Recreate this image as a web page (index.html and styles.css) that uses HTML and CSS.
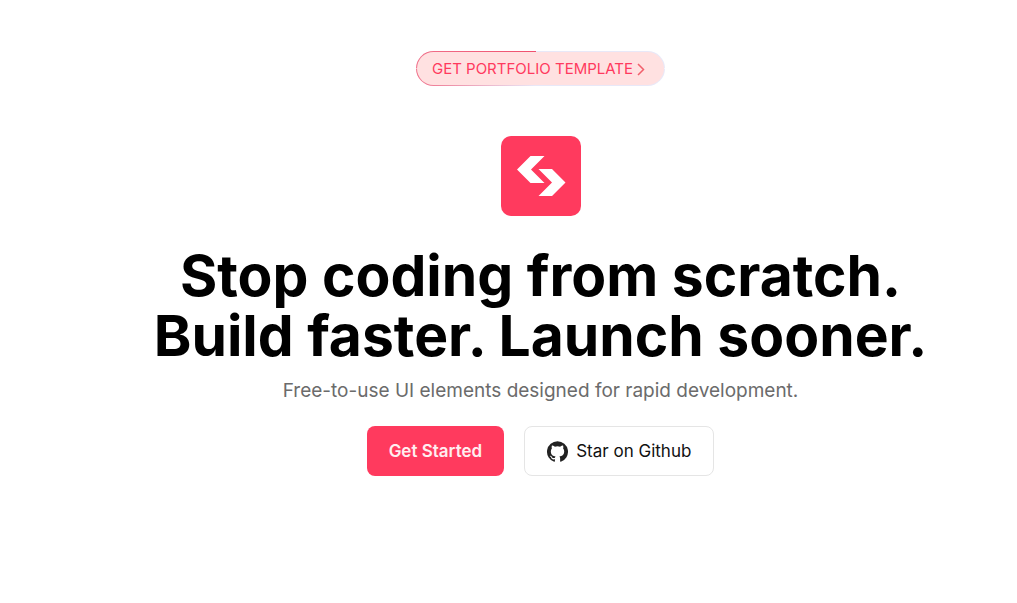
FILE: index.html
```html
<!DOCTYPE html>
<html lang="en">
<head>
  <meta charset="utf-8">
  <meta name="viewport" content="width=device-width, initial-scale=1">
  <title>UI elements for rapid development</title>
  <link rel="stylesheet" href="styles.css">
</head>
<body>
  <main class="hero">
    <a class="announcement" href="#template">
      <span>GET PORTFOLIO TEMPLATE</span>
      <svg class="chevron" viewBox="0 0 8 14" aria-hidden="true"><path d="M1 2l5.500 5.500L1 13" fill="none" stroke="currentColor" stroke-width="1.500"/></svg>
    </a>
    <svg class="logo" viewBox="0 0 80 80" aria-hidden="true">
      <rect width="80" height="80" rx="10" fill="#ff3a5e"/>
      <path fill="#fff" d="M29.500 20H43.500L30 33.500 43.500 47H29.500L16 33.500ZM37.500 33H51L64.500 46.500 51 60H37.500L51 46.500Z"/>
    </svg>
    <h1 class="title">Stop coding from scratch.<br>Build faster. Launch sooner.</h1>
    <p class="subtitle">Free-to-use UI elements designed for rapid development.</p>
    <div class="actions">
      <a class="button button-primary" href="#start">Get Started</a>
      <a class="button button-outline" href="#github">
        <svg class="github" viewBox="0 0 24 24" aria-hidden="true"><path fill="currentColor" d="M12 .3a12 12 0 0 0-3.800 23.380c.6.120.830-.260.830-.570v-2.230c-3.340.730-4.040-1.420-4.040-1.420-.550-1.380-1.330-1.750-1.330-1.750-1.090-.740.080-.730.080-.730 1.200.080 1.840 1.240 1.840 1.240 1.070 1.830 2.810 1.300 3.490 1 .110-.780.420-1.310.760-1.610-2.670-.3-5.470-1.330-5.470-5.930 0-1.310.470-2.380 1.240-3.220-.140-.3-.540-1.520.100-3.180 0 0 1.010-.320 3.300 1.230a11.500 11.500 0 0 1 6.020 0c2.280-1.550 3.290-1.230 3.290-1.230.640 1.660.240 2.880.120 3.180a4.650 4.650 0 0 1 1.230 3.220c0 4.610-2.800 5.620-5.480 5.920.420.360.810 1.100.810 2.220v3.290c0 .320.210.690.820.570A12 12 0 0 0 12 .3Z"/></svg>
        <span>Star on Github</span>
      </a>
    </div>
  </main>
</body>
</html>
```

FILE: styles.css
```css
* {
  box-sizing: border-box;
}

body {
  margin: 0;
  background: #fff;
  color: #000;
  font-family: Inter, "Liberation Sans", sans-serif;
}

.hero {
  display: flex;
  flex-direction: column;
  align-items: center;
  padding: 51px 0 48px 64px;
}

.announcement {
  display: flex;
  align-items: center;
  gap: 4px;
  padding: 8px 19px 8px 15px;
  border: 1px solid transparent;
  border-radius: 18px;
  background:
    linear-gradient(#ffe1e1, #ffe1e1) padding-box,
    linear-gradient(90deg, #f0708a, #f0506e 48%, #e8e8f8 48%) top / 100% 50% no-repeat border-box,
    linear-gradient(90deg, #f0708a, #e8e8f8 48%) bottom / 100% 50% no-repeat border-box;
  color: #ff3a5e;
  font-size: 15px;
  line-height: 17px;
  text-decoration: none;
}

.chevron {
  width: 8px;
  height: 14px;
  color: #f2606c;
}

.logo {
  width: 80px;
  height: 80px;
  margin-top: 50px;
}

.title {
  margin: 30px 0 0;
  font-size: 57px;
  font-weight: 700;
  line-height: 60px;
  text-align: center;
}

.subtitle {
  margin: 10px 0 0;
  color: #6b6b6b;
  font-size: 19px;
  line-height: 30px;
  text-align: center;
}

.actions {
  display: flex;
  flex-wrap: wrap;
  justify-content: center;
  gap: 20px;
  margin-top: 20px;
}

.button {
  display: flex;
  align-items: center;
  gap: 8px;
  min-height: 50px;
  padding: 0 21px;
  border: 1px solid transparent;
  border-radius: 8px;
  font-size: 17px;
  line-height: 24px;
  text-decoration: none;
}

.button-primary {
  background: #ff3a5e;
  color: #ffeef0;
  font-weight: 600;
}

.button-outline {
  padding: 0 22px;
  border-color: #e5e5e5;
  background: #fff;
  color: #111;
}

.github {
  width: 21px;
  height: 21px;
  color: #222;
}
```
